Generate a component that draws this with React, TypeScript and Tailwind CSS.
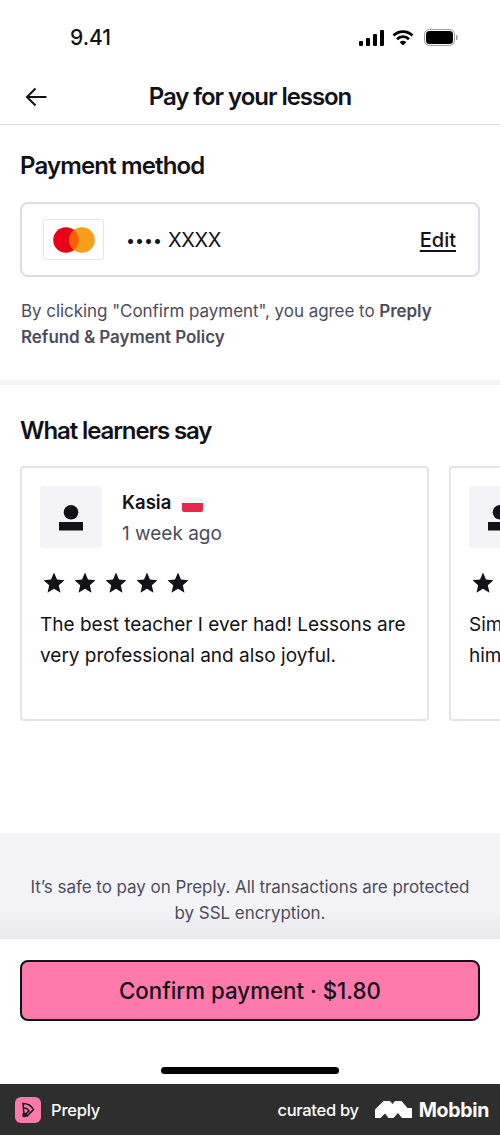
import React from "react";

const Star = () => (
  <svg width="24" height="24" viewBox="0 0 24 24" className="block">
    <path d="M12 1.500l3 7 7.500.7-5.700 5 1.700 7.500L12 17.800l-6.500 3.900 1.700-7.500-5.700-5L9 8.500z" fill="#121117" />
  </svg>
);

const Avatar = () => (
  <div className="w-[62px] h-[62px] bg-[#f4f4f8] rounded-[4px] flex items-center justify-center shrink-0">
    <svg width="24" height="30" viewBox="0 0 24 30" className="block">
      <circle cx="12" cy="10.300" r="7.300" fill="#121117" />
      <rect x="0" y="20" width="24" height="8.500" fill="#121117" />
    </svg>
  </div>
);

const Stars = () => (
  <div className="flex gap-[7px] mt-[23px] ml-[2px] w-fit">
    <Star /><Star /><Star /><Star /><Star />
  </div>
);

export default function App() {
  return (
    <div className="w-[500px] h-[1135px] bg-white flex flex-col overflow-hidden text-[#121117] font-['Inter',sans-serif]">
      <div className="h-[70px] shrink-0 flex items-start justify-between pt-[26px] pl-[70px] pr-[41px]">
        <span className="text-[21px] leading-[24px] font-medium">9.41</span>
        <div className="flex items-center pt-[3px]">
          <svg width="25" height="16" viewBox="0 0 25 16" className="block">
            <rect x="0" y="11" width="4" height="5" rx="1" fill="#000" />
            <rect x="7" y="8" width="4" height="8" rx="1" fill="#000" />
            <rect x="14" y="4" width="4" height="12" rx="1" fill="#000" />
            <rect x="21" y="0" width="4" height="16" rx="1" fill="#000" />
          </svg>
          <svg width="22" height="16" viewBox="0 0 22 16" className="block ml-[8px]" fill="none" stroke="#000" strokeWidth="2.800">
            <path d="M1.500 5.500a13.500 13.500 0 0 1 19 0" />
            <path d="M5 9.200a8.500 8.500 0 0 1 12 0" />
            <path d="M11 15.500l-3.300-3.200a4.500 4.500 0 0 1 6.600 0z" fill="#000" stroke="none" />
          </svg>
          <svg width="35" height="17" viewBox="0 0 35 17" className="block ml-[10px]">
            <rect x="0.500" y="0.500" width="30" height="16" rx="5" fill="none" stroke="#9a9a9a" />
            <rect x="2" y="2" width="27" height="13" rx="3.500" fill="#000" />
            <rect x="32" y="6" width="1.500" height="5" rx="0.700" fill="#9a9a9a" />
          </svg>
        </div>
      </div>

      <div className="h-[55px] shrink-0 border-b border-[#dcdce5] relative flex items-center justify-center">
        <svg width="24" height="24" viewBox="0 0 24 24" fill="none" stroke="#121117" strokeWidth="2" className="absolute left-[24px] top-[15px]">
          <path d="M22.500 12H3.500M11.500 3.500L3 12l8.500 8.500" />
        </svg>
        <h1 className="text-[24px] leading-[32px] font-semibold tracking-[-1.05px]">Pay for your lesson</h1>
      </div>

      <div className="px-5 pt-[25px] shrink-0">
        <h2 className="text-[24px] leading-[32px] font-semibold tracking-[-0.85px]">Payment method</h2>
        <div className="mt-[20px] h-[75px] border-2 border-[#dcdce5] rounded-[8px] flex items-center pl-[21px] pr-[20px]">
          <div className="w-[61px] h-[41px] border border-[#e4e4ea] rounded-[3px] flex items-center justify-center">
            <svg width="42" height="26" viewBox="0 0 42 26" className="block">
              <circle cx="13" cy="13" r="12.800" fill="#e8001b" />
              <circle cx="29" cy="13" r="12.800" fill="#f79e1b" />
              <path d="M21 3a12.800 12.800 0 0 1 0 20 12.800 12.800 0 0 1 0-20z" fill="#ff5f00" />
            </svg>
          </div>
          <span className="ml-[22px] flex items-center text-[20px] leading-[28px]">
            <span className="text-[16px] mr-[6px]">••••</span>
            <span className="tracking-[-0.4px]">XXXX</span>
          </span>
          <span className="ml-auto mr-[2px] text-[20px] leading-[26px] font-medium underline decoration-2 underline-offset-[3px]">Edit</span>
        </div>
        <p className="mt-[21px] pl-[1px] text-[17px] leading-[26px] text-[#4d4c5c] tracking-[-0.05px]">
          By clicking "Confirm payment", you agree to <span className="font-semibold">Preply Refund &amp; Payment Policy</span>
        </p>
      </div>

      <div className="h-[5px] mt-[30px] shrink-0 bg-[#f4f4f8]" />

      <div className="pl-5 pt-[30px] shrink-0">
        <h2 className="text-[24px] leading-[32px] font-semibold tracking-[-1.1px]">What learners say</h2>
        <div className="mt-[19px] flex gap-5 overflow-hidden">
          <div className="w-[409px] h-[255px] shrink-0 border-2 border-[#e4e4ea] rounded-[4px] pt-[18px] px-[18px]">
            <div className="flex gap-[20px]">
              <Avatar />
              <div>
                <div className="flex items-center gap-[11px] h-[32px]">
                  <span className="text-[18.500px] leading-[24px] font-semibold">Kasia</span>
                  <div className="w-[21px] h-[14px] mt-[6px] rounded-[2px] overflow-hidden flex flex-col">
                    <div className="h-[5px] bg-[#f4f4f8]" />
                    <div className="h-[9px] bg-[#e8264c]" />
                  </div>
                </div>
                <div className="mt-[2px] text-[19px] leading-[28px] text-[#4d4c5c]">1 week ago</div>
              </div>
            </div>
            <Stars />
            <p className="mt-[14px] text-[19px] leading-[31px] w-[372px]">
              The best teacher I ever had! Lessons are very professional and also joyful.
            </p>
          </div>
          <div className="w-[409px] h-[255px] shrink-0 border-2 border-[#e4e4ea] rounded-[4px] pt-[18px] px-[18px]">
            <Avatar />
            <Stars />
            <p className="mt-[14px] text-[19px] leading-[31px] w-[372px]">
              Simply<br />him
            </p>
          </div>
        </div>
      </div>

      <div className="h-[106px] mt-[112px] shrink-0 bg-gradient-to-b from-[#f4f4f8] from-70% to-[#e9e9ed] pt-[41px] px-6 text-center text-[17px] leading-[26px] tracking-[-0.05px] text-[#4d4c5c]">
        It’s safe to pay on Preply. All transactions are protected<br />by SSL encryption.
      </div>

      <div className="px-5 pt-[21px] shrink-0">
        <div className="h-[61px] bg-[#ff7aac] border-2 border-[#121117] rounded-[8px] flex items-center justify-center text-[22.300px] leading-[28px] font-medium">
          Confirm payment · $1.80
        </div>
      </div>

      <div className="flex justify-center mt-[46px] shrink-0">
        <div className="w-[178px] h-[7px] rounded-full bg-black" />
      </div>

      <div className="mt-[10px] h-[51px] shrink-0 bg-[#2e2e2e] flex items-center justify-between pl-[15px] pr-[11px] text-white">
        <div className="flex items-center gap-[10px]">
          <div className="w-[26px] h-[26px] rounded-[6px] bg-[#ff7aac] flex items-center justify-center">
            <svg width="18" height="18" viewBox="0 0 18 18" fill="none" stroke="#121117" strokeWidth="1.500" className="block">
              <path d="M4 2.500c4.500 0 8.500 2.500 10.500 6L8 15l-3-1.500z" />
              <path d="M5 7c2 0 3.800 1.100 5 2.800l-3.500 3.500" />
              <circle cx="5.500" cy="14" r="1.600" />
            </svg>
          </div>
          <span className="text-[16.500px] leading-[24px] font-medium tracking-[-0.2px]">Preply</span>
        </div>
        <div className="flex items-center">
          <span className="text-[16.500px] leading-[24px] font-medium tracking-[-0.3px]">curated by</span>
          <svg width="37" height="17" viewBox="0 0 37 17" className="block ml-[16px]">
            <path d="M0 17V8.500L8.500 0H15l2.500 3L20 0h6.500l6 7H37v10H27l-4-5-4.500 5h-5L10 12.500 5.500 17z" fill="#fff" />
          </svg>
          <span className="ml-[7px] text-[19.500px] leading-[24px] font-bold tracking-[-0.3px]">Mobbin</span>
        </div>
      </div>
    </div>
  );
}
